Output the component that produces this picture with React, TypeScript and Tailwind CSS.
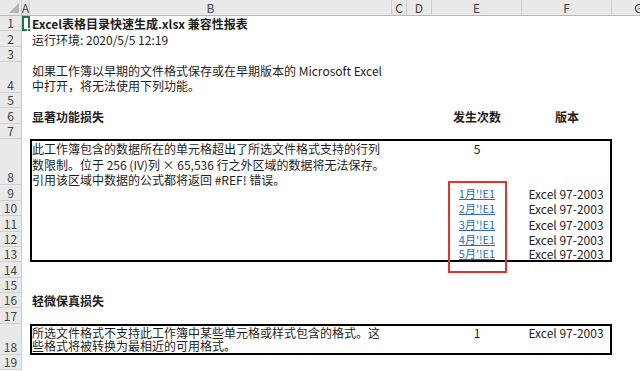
import { ReactNode } from "react";

type Box = "top" | "mid" | "bottom" | "single";

interface RowProps {
  label: string;
  height: string;
  b?: ReactNode;
  e?: ReactNode;
  f?: ReactNode;
  box?: Box;
  top?: boolean;
  selected?: boolean;
}

const boxClass: Record<Box, string> = {
  top: "border-x-2 border-t-2 border-black",
  mid: "border-x-2 border-black",
  bottom: "border-x-2 border-b-2 border-black",
  single: "border-2 border-black",
};

function HeaderRow() {
  const cols: { name: string; width: string }[] = [
    { name: "A", width: "w-[8px]" },
    { name: "B", width: "w-[362px]" },
    { name: "C", width: "w-[15px]" },
    { name: "D", width: "w-[25px]" },
    { name: "E", width: "w-[90px]" },
    { name: "F", width: "w-[90px]" },
    { name: "G", width: "w-[54px]" },
  ];
  return (
    <div className="flex h-[16px] border-b border-[#b8b8b8] bg-[#e9e9e9]">
      <div className="flex w-[22px] shrink-0 items-end justify-end border-r border-[#c8c8c8] pb-[2px] pr-[2px]">
        <svg width="10" height="10" viewBox="0 0 10 10">
          <polygon points="10,0 10,10 0,10" fill="#b4b4b4" />
        </svg>
      </div>
      {cols.map((col) => (
        <div
          key={col.name}
          className={`${col.width} flex shrink-0 items-center justify-center overflow-hidden border-r border-[#cfcfcf] text-[12px] leading-none text-[#444]`}
        >
          {col.name}
        </div>
      ))}
    </div>
  );
}

function Row({ label, height, b, e, f, box, top, selected }: RowProps) {
  const align = top ? "items-start" : "items-end";
  return (
    <div className={`flex ${height} shrink-0`}>
      <div className="flex w-[22px] shrink-0 items-end justify-center border-b border-r border-[#cfcfcf] bg-[#e9e9e9] text-[12px] leading-[14px] text-[#444]">
        {label}
      </div>
      <div className={`relative w-[8px] shrink-0 ${selected ? "border-2 border-[#217346]" : ""}`}>
        {selected ? <span className="absolute -bottom-[3px] -right-[3px] h-[4px] w-[4px] border border-white bg-[#217346]" /> : null}
      </div>
      <div className={`flex w-[582px] shrink-0 ${box ? boxClass[box] : ""}`}>
        <div className={`flex min-w-0 flex-1 ${align} ${box ? "pl-0" : "pl-[2px]"} whitespace-nowrap`}>{b}</div>
        <div className="w-[15px] shrink-0" />
        <div className="w-[25px] shrink-0" />
        <div className={`flex w-[90px] shrink-0 justify-center ${align}`}>{e}</div>
        <div className={`flex ${box ? "w-[88px]" : "w-[90px]"} shrink-0 justify-center ${align}`}>{f}</div>
      </div>
      <div className="w-[54px] shrink-0" />
    </div>
  );
}

function Link({ children, tight }: { children: ReactNode; tight?: boolean }) {
  return (
    <span className={`text-[11px] ${tight ? "leading-[13px]" : "leading-[15px]"} text-[#2f66c0] underline decoration-[#2f66c0]`}>
      {children}
    </span>
  );
}

function Ver({ tight }: { tight?: boolean }) {
  return <span className={tight ? "leading-[13px]" : "leading-[15px]"}>Excel 97-2003</span>;
}

export default function App() {
  return (
    <div className="relative h-[371px] w-[640px] overflow-hidden bg-white font-['Noto_Sans_CJK_SC',sans-serif] text-[12px] leading-[15.4px] text-[#1e1e1e]">
      <div className="w-max">
        <HeaderRow />
        <Row label="1" height="h-[15.4px]" selected b={<span className="font-bold leading-[15px]">Excel表格目录快速生成.xlsx 兼容性报表</span>} />
        <Row label="2" height="h-[15.4px]" b={<span className="leading-[15px]">运行环境: 2020/5/5 12:19</span>} />
        <Row label="3" height="h-[15.4px]" />
        <Row
          label="4"
          height="h-[30.8px]"
          b={
            <span className="leading-[15px]">
              如果工作簿以早期的文件格式保存或在早期版本的 Microsoft Excel
              <br />
              中打开，将无法使用下列功能。
            </span>
          }
        />
        <Row label="5" height="h-[15.4px]" />
        <Row
          label="6"
          height="h-[15.4px]"
          b={<span className="font-bold leading-[15px]">显著功能损失</span>}
          e={<span className="font-bold leading-[15px]">发生次数</span>}
          f={<span className="font-bold leading-[15px]">版本</span>}
        />
        <Row label="7" height="h-[15.4px]" />
        <Row
          label="8"
          height="h-[46.2px]"
          box="top"
          top
          b={
            <span className="leading-[15.4px]">
              此工作簿包含的数据所在的单元格超出了所选文件格式支持的行列
              <br />
              数限制。位于 256 (IV)列 × 65,536 行之外区域的数据将无法保存。
              <br />
              引用该区域中数据的公式都将返回 #REF! 错误。
            </span>
          }
          e={<span className="leading-[15.4px]">5</span>}
        />
        <Row label="9" height="h-[15.4px]" box="mid" e={<Link>1月'!E1</Link>} f={<Ver />} />
        <Row label="10" height="h-[15.4px]" box="mid" e={<Link>2月'!E1</Link>} f={<Ver />} />
        <Row label="11" height="h-[15.4px]" box="mid" e={<Link>3月'!E1</Link>} f={<Ver />} />
        <Row label="12" height="h-[15.4px]" box="mid" e={<Link>4月'!E1</Link>} f={<Ver />} />
        <Row label="13" height="h-[15.4px]" box="bottom" e={<Link tight>5月'!E1</Link>} f={<Ver tight />} />
        <Row label="14" height="h-[15.4px]" />
        <Row label="15" height="h-[15.4px]" />
        <Row label="16" height="h-[15.4px]" b={<span className="font-bold leading-[15px]">轻微保真损失</span>} />
        <Row label="17" height="h-[15.4px]" />
        <Row
          label="18"
          height="h-[30.8px]"
          box="single"
          top
          b={
            <span className="leading-[13.4px]">
              所选文件格式不支持此工作簿中某些单元格或样式包含的格式。这
              <br />
              些格式将被转换为最相近的可用格式。
            </span>
          }
          e={<span className="leading-[13.4px]">1</span>}
          f={<span className="leading-[13.4px]">Excel 97-2003</span>}
        />
        <Row label="19" height="h-[15.4px]" />
      </div>
      <div className="pointer-events-none absolute left-[448px] top-[181px] h-[92px] w-[59px] border-2 border-[#e5322d]" />
    </div>
  );
}
